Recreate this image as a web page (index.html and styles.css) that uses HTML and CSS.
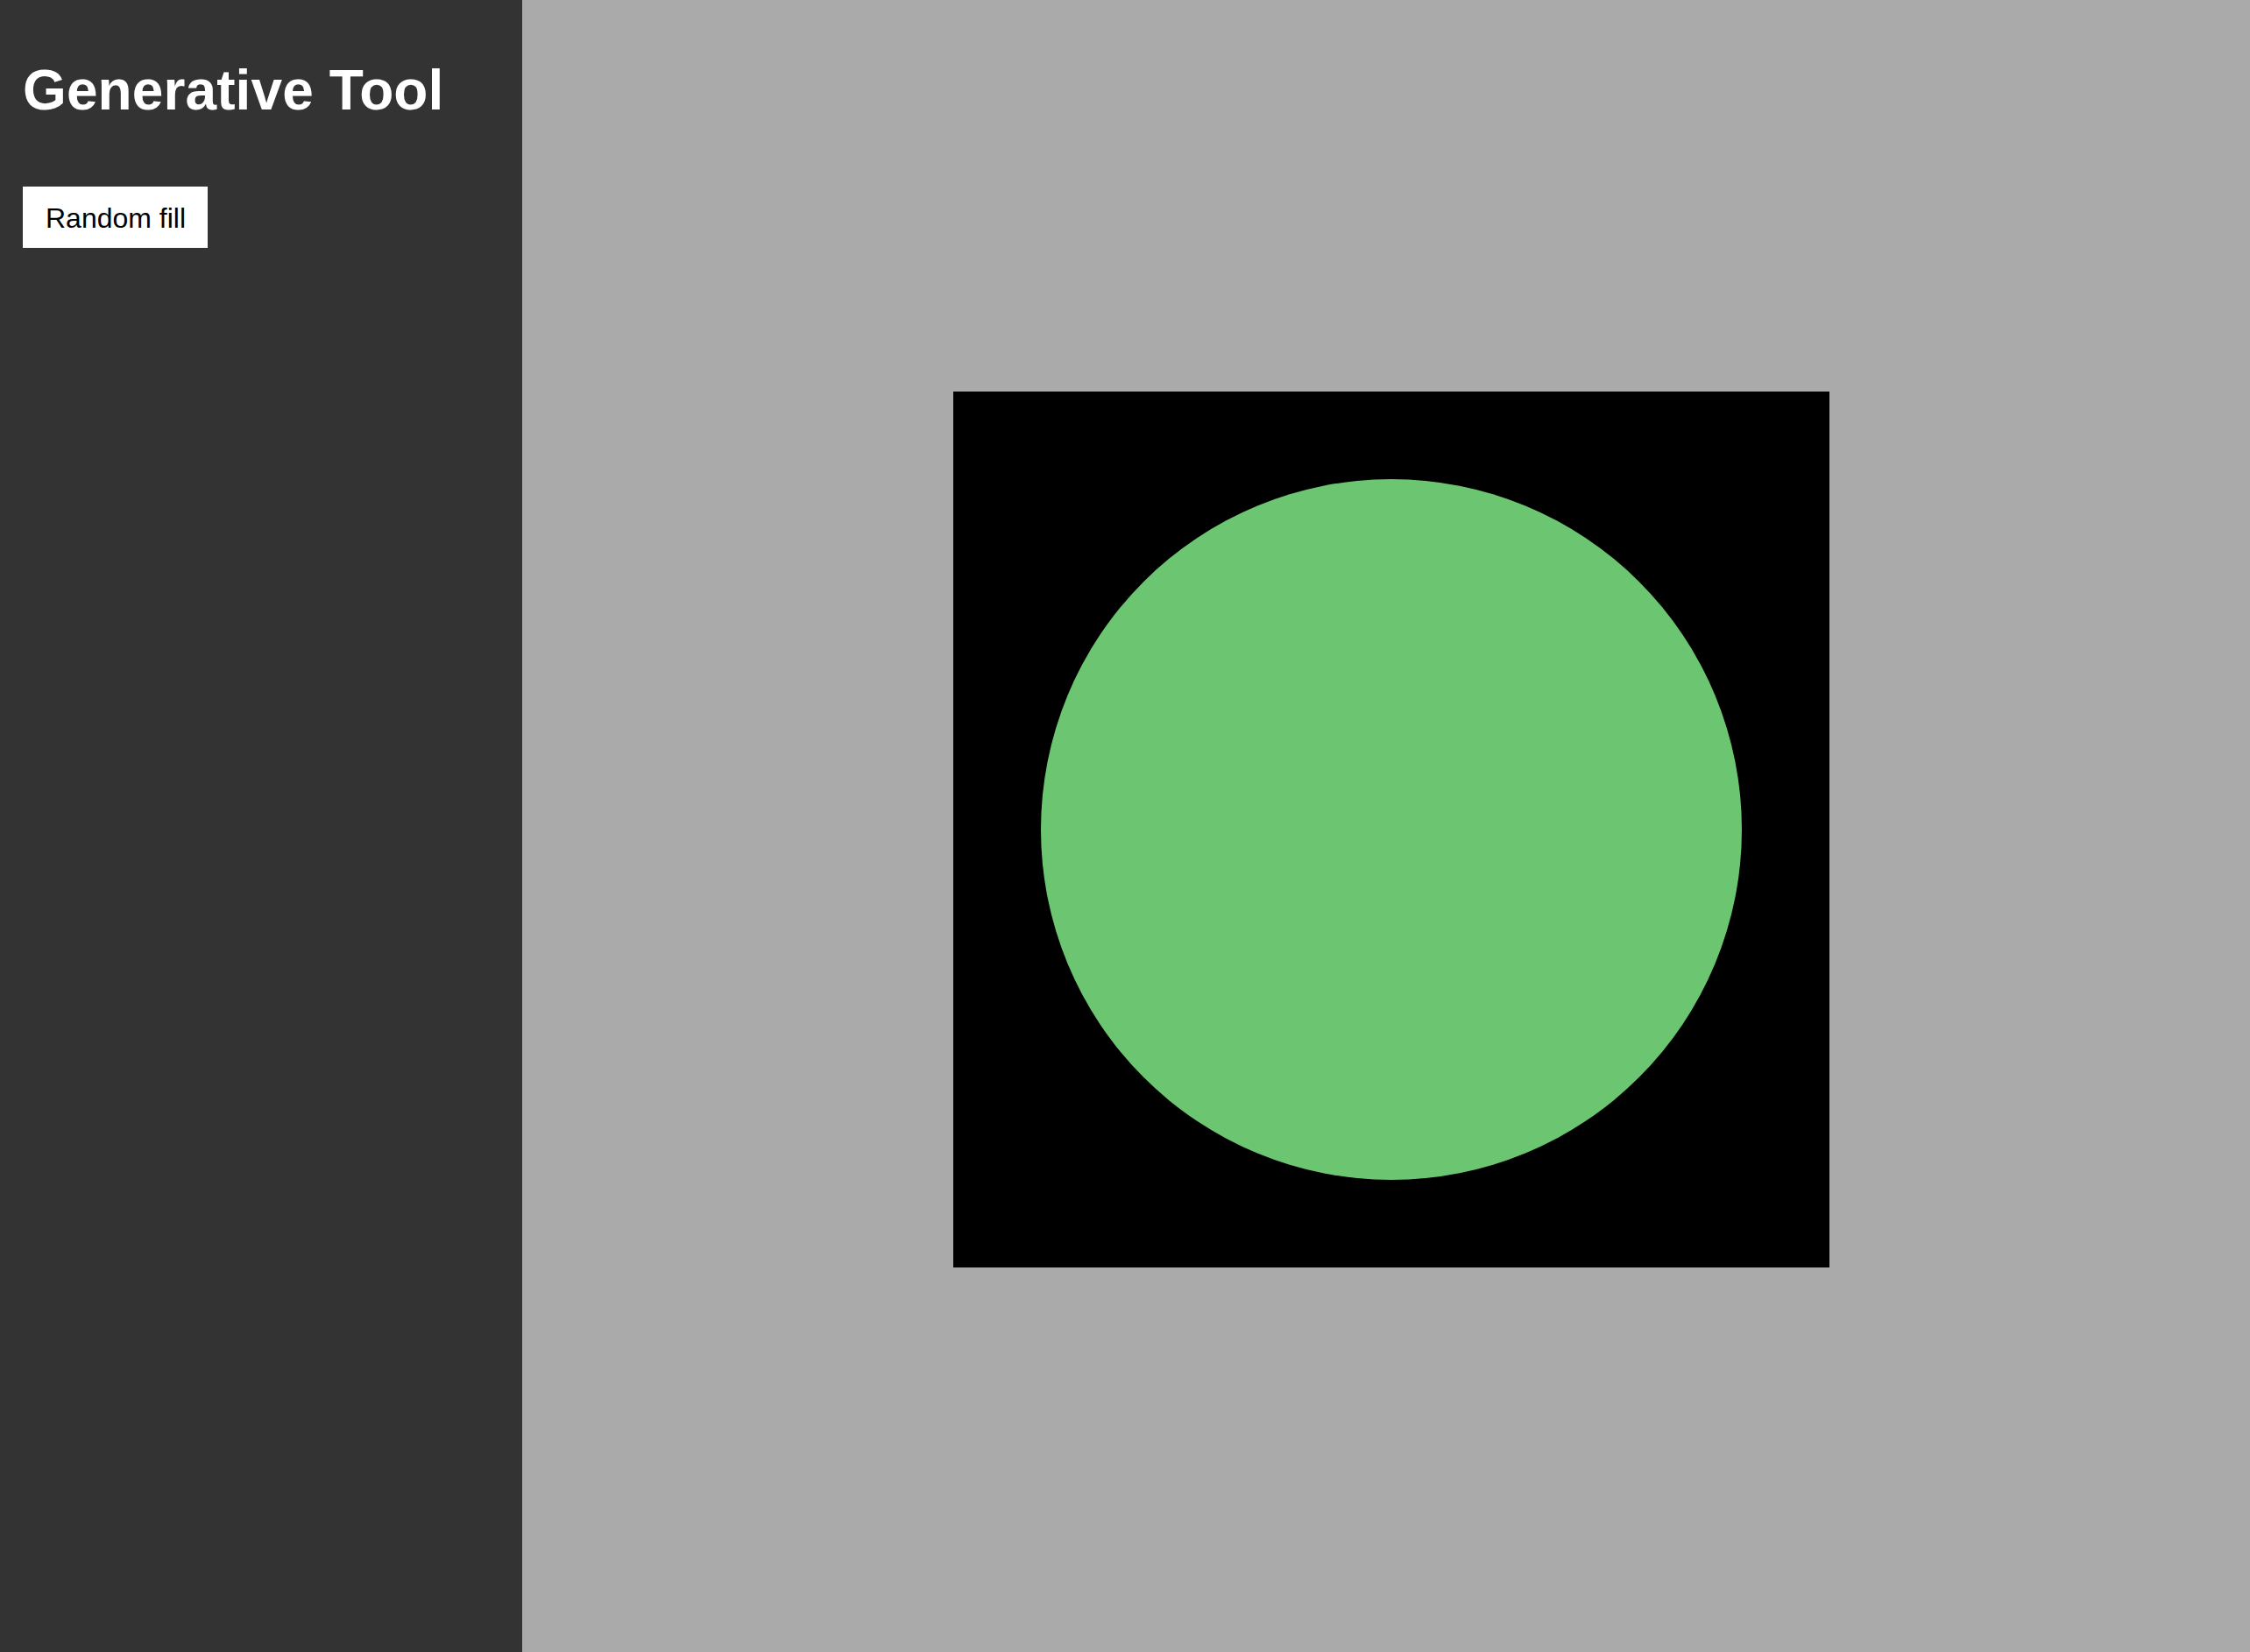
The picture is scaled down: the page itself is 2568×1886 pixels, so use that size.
FILE: index.html
```html
<!DOCTYPE html>
<html lang="en">
<head>
<meta charset="utf-8">
<title>Generative Tool</title>
<link rel="stylesheet" href="styles.css">
</head>
<body>
  <aside class="sidebar">
    <h1 class="title">Generative Tool</h1>
    <button class="btn" type="button">Random fill</button>
  </aside>
  <main class="stage">
    <div class="canvas">
      <div class="circle"></div>
    </div>
  </main>
</body>
</html>
```

FILE: styles.css
```css
html, body {
  margin: 0;
  padding: 0;
  height: 100%;
}
body {
  display: flex;
  font-family: "Liberation Sans", Arial, Helvetica, sans-serif;
  background: #aaaaaa;
  overflow: hidden;
}
.sidebar {
  width: 596px;
  flex: none;
  box-sizing: border-box;
  background: #333333;
  padding: 66px 26px 0 26px;
  display: flex;
  flex-direction: column;
  align-items: flex-start;
}
.title {
  margin: 0;
  color: #ffffff;
  font-size: 64px;
  font-weight: 700;
  line-height: 74px;
  letter-spacing: 0.1px;
}
.btn {
  margin-top: 73px;
  background: #ffffff;
  color: #000000;
  border: none;
  border-radius: 0;
  font-family: "Liberation Sans", Arial, Helvetica, sans-serif;
  font-size: 32px;
  line-height: 38px;
  padding: 17px 25px 15px 26px;
  cursor: pointer;
}
.stage {
  flex: 1;
  display: flex;
  align-items: center;
  justify-content: center;
  box-sizing: border-box;
  padding: 8px 0 0 12px;
  background: #aaaaaa;
}
.canvas {
  width: 1000px;
  height: 1000px;
  background: #000000;
  display: flex;
  align-items: center;
  justify-content: center;
}
.circle {
  width: 800px;
  height: 800px;
  border-radius: 50%;
  background: #6cc570;
}
```
